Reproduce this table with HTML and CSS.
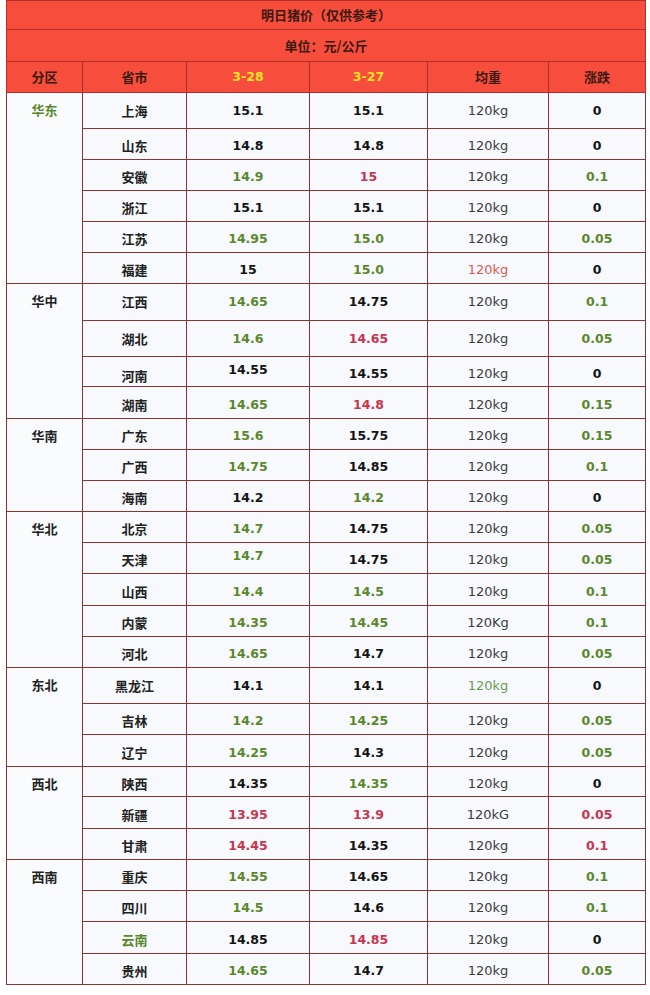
FILE: index.html
```html
<!DOCTYPE html>
<html lang="zh-CN">
<head>
<meta charset="utf-8">
<title>明日猪价</title>
<link rel="stylesheet" href="styles.css">
</head>
<body>
<table class="price">
  <colgroup>
    <col class="c1"><col class="c2"><col class="c3"><col class="c4"><col class="c5"><col class="c6">
  </colgroup>
  <tr class="head h29"><td colspan="6">明日猪价（仅供参考）</td></tr>
  <tr class="head h32"><td colspan="6">单位：元/公斤</td></tr>
  <tr class="head h31">
    <td>分区</td><td>省市</td><td class="num yel">3-28</td><td class="num yel">3-27</td><td>均重</td><td>涨跌</td>
  </tr>

  <tr class="h36"><td class="reg g" rowspan="6">华东</td><td>上海</td><td class="num">15.1</td><td class="num">15.1</td><td class="wt">120kg</td><td class="num">0</td></tr>
  <tr><td>山东</td><td class="num">14.8</td><td class="num">14.8</td><td class="wt">120kg</td><td class="num">0</td></tr>
  <tr><td>安徽</td><td class="num g">14.9</td><td class="num r">15</td><td class="wt">120kg</td><td class="num g">0.1</td></tr>
  <tr><td>浙江</td><td class="num">15.1</td><td class="num">15.1</td><td class="wt">120kg</td><td class="num">0</td></tr>
  <tr><td>江苏</td><td class="num g">14.95</td><td class="num g">15.0</td><td class="wt">120kg</td><td class="num g">0.05</td></tr>
  <tr><td>福建</td><td class="num">15</td><td class="num g">15.0</td><td class="wt wr">120kg</td><td class="num">0</td></tr>

  <tr class="h37"><td class="reg" rowspan="4">华中</td><td>江西</td><td class="num g">14.65</td><td class="num">14.75</td><td class="wt">120kg</td><td class="num g">0.1</td></tr>
  <tr class="h36"><td>湖北</td><td class="num g">14.6</td><td class="num r">14.65</td><td class="wt">120kg</td><td class="num g">0.05</td></tr>
  <tr class="h30"><td class="low">河南</td><td class="num up">14.55</td><td class="num">14.55</td><td class="wt">120kg</td><td class="num">0</td></tr>
  <tr class="h32"><td>湖南</td><td class="num g">14.65</td><td class="num r">14.8</td><td class="wt">120kg</td><td class="num g">0.15</td></tr>

  <tr><td class="reg" rowspan="3">华南</td><td>广东</td><td class="num g">15.6</td><td class="num">15.75</td><td class="wt">120kg</td><td class="num g">0.15</td></tr>
  <tr><td>广西</td><td class="num g">14.75</td><td class="num">14.85</td><td class="wt">120kg</td><td class="num g">0.1</td></tr>
  <tr><td>海南</td><td class="num">14.2</td><td class="num g">14.2</td><td class="wt">120kg</td><td class="num">0</td></tr>

  <tr><td class="reg" rowspan="5">华北</td><td>北京</td><td class="num g">14.7</td><td class="num">14.75</td><td class="wt">120kg</td><td class="num g">0.05</td></tr>
  <tr><td>天津</td><td class="num g up">14.7</td><td class="num">14.75</td><td class="wt">120kg</td><td class="num g">0.05</td></tr>
  <tr class="h32"><td>山西</td><td class="num g">14.4</td><td class="num g">14.5</td><td class="wt">120kg</td><td class="num g">0.1</td></tr>
  <tr><td>内蒙</td><td class="num g">14.35</td><td class="num g">14.45</td><td class="wt">120Kg</td><td class="num g">0.1</td></tr>
  <tr><td>河北</td><td class="num g">14.65</td><td class="num">14.7</td><td class="wt">120kg</td><td class="num g">0.05</td></tr>

  <tr class="h36"><td class="reg" rowspan="3">东北</td><td>黑龙江</td><td class="num">14.1</td><td class="num">14.1</td><td class="wt wg">120kg</td><td class="num">0</td></tr>
  <tr><td>吉林</td><td class="num g">14.2</td><td class="num g">14.25</td><td class="wt">120kg</td><td class="num g">0.05</td></tr>
  <tr class="h32"><td>辽宁</td><td class="num g">14.25</td><td class="num">14.3</td><td class="wt">120kg</td><td class="num g">0.05</td></tr>

  <tr class="h30"><td class="reg" rowspan="3">西北</td><td>陕西</td><td class="num">14.35</td><td class="num g">14.35</td><td class="wt">120kg</td><td class="num">0</td></tr>
  <tr class="h32"><td>新疆</td><td class="num r">13.95</td><td class="num r">13.9</td><td class="wt">120kG</td><td class="num r">0.05</td></tr>
  <tr><td>甘肃</td><td class="num r">14.45</td><td class="num">14.35</td><td class="wt">120kg</td><td class="num r">0.1</td></tr>

  <tr><td class="reg" rowspan="4">西南</td><td>重庆</td><td class="num g">14.55</td><td class="num">14.65</td><td class="wt">120kg</td><td class="num g">0.1</td></tr>
  <tr><td>四川</td><td class="num g">14.5</td><td class="num">14.6</td><td class="wt">120kg</td><td class="num g">0.1</td></tr>
  <tr class="h32"><td class="g">云南</td><td class="num">14.85</td><td class="num r">14.85</td><td class="wt">120kg</td><td class="num">0</td></tr>
  <tr><td>贵州</td><td class="num g">14.65</td><td class="num">14.7</td><td class="wt">120kg</td><td class="num g">0.05</td></tr>
</table>
</body>
</html>
```

FILE: styles.css
```css
html, body {
  margin: 0;
  padding: 0;
  background: #ffffff;
}

.price {
  margin-left: 6px;
  width: 639px;
  table-layout: fixed;
  border-collapse: collapse;
  font-family: "Noto Sans CJK SC", "DejaVu Sans", sans-serif;
  font-size: 13px;
  font-weight: bold;
  color: #222222;
}

.c1 { width: 76px; }
.c2 { width: 104px; }
.c3 { width: 123px; }
.c4 { width: 118px; }
.c5 { width: 121px; }
.c6 { width: 97px; }

.price td {
  box-sizing: border-box;
  height: 31px;
  padding: 4px 0 0;
  border: 1px solid #8a3434;
  background: #f7f9fc;
  text-align: center;
  vertical-align: middle;
  line-height: 18px;
}

.price .head td {
  background: #f64d3c;
  border-color: #b3302a;
  color: #3a1a12;
  padding-top: 0;
}

.price tr.h29 td { height: 29px; }
.price tr.h30 td { height: 30px; }
.price tr.h31 td { height: 31px; }
.price tr.h32 td { height: 32px; }
.price tr.h36 td { height: 36px; padding-top: 0; }
.price tr.h37 td { height: 37px; padding-top: 0; }

.price td.reg,
.price tr.h36 td.reg,
.price tr.h37 td.reg {
  vertical-align: top;
  padding-top: 8px;
  background: #f9fbfd;
}

.price td.num {
  font-family: "DejaVu Sans", sans-serif;
  font-size: 12.5px;
  color: #141414;
}

.price td.wt {
  font-family: "DejaVu Sans", sans-serif;
  font-size: 13px;
  font-weight: normal;
  color: #3c3c3c;
}

.price .head td.yel { color: #ffe224; }

.price td.g { color: #5b872c; }
.price td.r { color: #c73550; }
.price td.wr { color: #e05a55; }
.price td.wg { color: #6a9a58; }

.price td.up { padding-top: 0; padding-bottom: 4px; }
.price td.low { padding-top: 8px; }
```
